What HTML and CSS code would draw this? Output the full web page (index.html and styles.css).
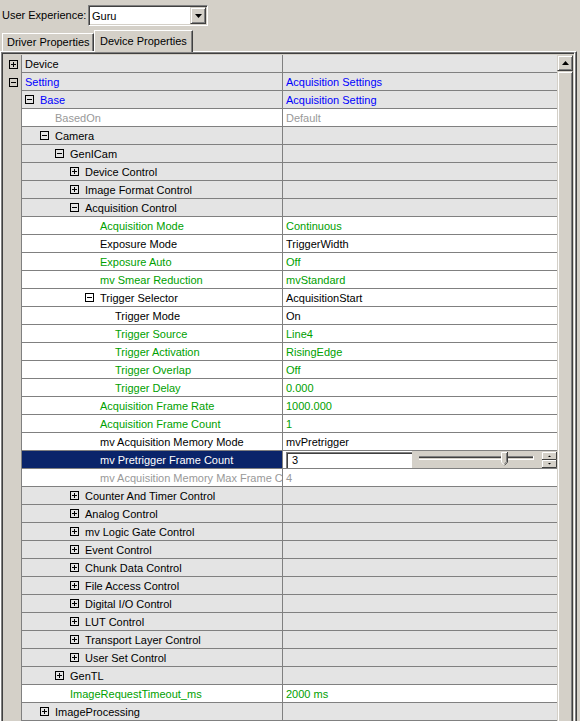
FILE: index.html
```html
<!DOCTYPE html>
<html lang="en">
<head>
    <meta charset="UTF-8">
    <title>Device Properties</title>
    <link rel="stylesheet" href="styles.css">
</head>
<body>

    <div class="toolbar">
        <span class="label">User Experience:</span>
        <div class="combo">
            <span class="combo-text">Guru</span>
            <span class="combo-btn">
                <svg width="7" height="4" viewBox="0 0 7 4"><path d="M0 0H7L3.5 4Z" fill="#000"/></svg>
            </span>
        </div>
    </div>

    <div class="tabs">
        <div class="tab">Driver Properties</div>
        <div class="tab active">Device Properties</div>
    </div>

    <div class="page">
        <div class="grid">
            <div class="rows">
                <div class="row"><div class="gutter"><i class="box plus"></i></div><div class="name l0">Device</div><div class="value"></div></div>
                <div class="row"><div class="gutter"><i class="box minus"></i></div><div class="name l0 blue">Setting</div><div class="value blue">Acquisition Settings</div></div>
                <div class="row"><div class="gutter"></div><div class="name l1 blue"><i class="box minus"></i>Base</div><div class="value blue">Acquisition Setting</div></div>
                <div class="row leaf"><div class="gutter"></div><div class="name l2 dim">BasedOn</div><div class="value dim">Default</div></div>
                <div class="row"><div class="gutter"></div><div class="name l2"><i class="box minus"></i>Camera</div><div class="value"></div></div>
                <div class="row"><div class="gutter"></div><div class="name l3"><i class="box minus"></i>GenICam</div><div class="value"></div></div>
                <div class="row"><div class="gutter"></div><div class="name l4"><i class="box plus"></i>Device Control</div><div class="value"></div></div>
                <div class="row"><div class="gutter"></div><div class="name l4"><i class="box plus"></i>Image Format Control</div><div class="value"></div></div>
                <div class="row"><div class="gutter"></div><div class="name l4"><i class="box minus"></i>Acquisition Control</div><div class="value"></div></div>
                <div class="row leaf"><div class="gutter"></div><div class="name l5 green">Acquisition Mode</div><div class="value green">Continuous</div></div>
                <div class="row leaf"><div class="gutter"></div><div class="name l5">Exposure Mode</div><div class="value">TriggerWidth</div></div>
                <div class="row leaf"><div class="gutter"></div><div class="name l5 green">Exposure Auto</div><div class="value green">Off</div></div>
                <div class="row leaf"><div class="gutter"></div><div class="name l5 green">mv Smear Reduction</div><div class="value green">mvStandard</div></div>
                <div class="row leaf"><div class="gutter"></div><div class="name l5"><i class="box minus"></i>Trigger Selector</div><div class="value">AcquisitionStart</div></div>
                <div class="row leaf"><div class="gutter"></div><div class="name l6">Trigger Mode</div><div class="value">On</div></div>
                <div class="row leaf"><div class="gutter"></div><div class="name l6 green">Trigger Source</div><div class="value green">Line4</div></div>
                <div class="row leaf"><div class="gutter"></div><div class="name l6 green">Trigger Activation</div><div class="value green">RisingEdge</div></div>
                <div class="row leaf"><div class="gutter"></div><div class="name l6 green">Trigger Overlap</div><div class="value green">Off</div></div>
                <div class="row leaf"><div class="gutter"></div><div class="name l6 green">Trigger Delay</div><div class="value green">0.000</div></div>
                <div class="row leaf"><div class="gutter"></div><div class="name l5 green">Acquisition Frame Rate</div><div class="value green">1000.000</div></div>
                <div class="row leaf"><div class="gutter"></div><div class="name l5 green">Acquisition Frame Count</div><div class="value green">1</div></div>
                <div class="row leaf"><div class="gutter"></div><div class="name l5">mv Acquisition Memory Mode</div><div class="value">mvPretrigger</div></div>
                <div class="row leaf sel">
                    <div class="gutter"></div>
                    <div class="name l5">mv Pretrigger Frame Count</div>
                    <div class="value editor">
                        <div class="edit">3</div>
                        <div class="slider">
                            <svg width="145" height="17" viewBox="0 0 145 17">
                                <rect x="7" y="5" width="114" height="1" fill="#808080"/>
                                <rect x="7" y="6" width="114" height="1" fill="#404040"/>
                                <rect x="7" y="8" width="114" height="1" fill="#fff"/>
                                <rect x="121" y="5" width="1" height="4" fill="#fff"/>
                                <path d="M89 1H96V11L92.5 14.5L89 11Z" fill="#d4d0c8"/>
                                <path d="M89.5 11V1.5H95" stroke="#fff" fill="none"/>
                                <path d="M95.5 1V11.2L92.5 14.3" stroke="#404040" fill="none"/>
                                <path d="M94.5 2V10.8L92.5 12.8" stroke="#808080" fill="none"/>
                                <path d="M89.5 11.2L92 13.7" stroke="#fff" fill="none"/>
                                <rect x="130" y="1" width="15" height="8" fill="#d4d0c8"/>
                                <path d="M130.5 8.5V1.5H144" stroke="#fff" fill="none"/>
                                <path d="M144.5 1V8.5H130" stroke="#404040" fill="none"/>
                                <path d="M136 6H139L137.5 4.5Z" fill="#000"/>
                                <rect x="130" y="9" width="15" height="8" fill="#d4d0c8"/>
                                <path d="M130.5 16.5V9.5H144" stroke="#fff" fill="none"/>
                                <path d="M144.5 9V16.5H130" stroke="#404040" fill="none"/>
                                <path d="M136 12H139L137.5 13.5Z" fill="#000"/>
                            </svg>
                        </div>
                    </div>
                </div>
                <div class="row leaf"><div class="gutter"></div><div class="name l5 dim">mv Acquisition Memory Max Frame Count</div><div class="value dim">4</div></div>
                <div class="row"><div class="gutter"></div><div class="name l4"><i class="box plus"></i>Counter And Timer Control</div><div class="value"></div></div>
                <div class="row"><div class="gutter"></div><div class="name l4"><i class="box plus"></i>Analog Control</div><div class="value"></div></div>
                <div class="row"><div class="gutter"></div><div class="name l4"><i class="box plus"></i>mv Logic Gate Control</div><div class="value"></div></div>
                <div class="row"><div class="gutter"></div><div class="name l4"><i class="box plus"></i>Event Control</div><div class="value"></div></div>
                <div class="row"><div class="gutter"></div><div class="name l4"><i class="box plus"></i>Chunk Data Control</div><div class="value"></div></div>
                <div class="row"><div class="gutter"></div><div class="name l4"><i class="box plus"></i>File Access Control</div><div class="value"></div></div>
                <div class="row"><div class="gutter"></div><div class="name l4"><i class="box plus"></i>Digital I/O Control</div><div class="value"></div></div>
                <div class="row"><div class="gutter"></div><div class="name l4"><i class="box plus"></i>LUT Control</div><div class="value"></div></div>
                <div class="row"><div class="gutter"></div><div class="name l4"><i class="box plus"></i>Transport Layer Control</div><div class="value"></div></div>
                <div class="row"><div class="gutter"></div><div class="name l4"><i class="box plus"></i>User Set Control</div><div class="value"></div></div>
                <div class="row"><div class="gutter"></div><div class="name l3"><i class="box plus"></i>GenTL</div><div class="value"></div></div>
                <div class="row leaf"><div class="gutter"></div><div class="name l3 green">ImageRequestTimeout_ms</div><div class="value green">2000 ms</div></div>
                <div class="row"><div class="gutter"></div><div class="name l2"><i class="box plus"></i>ImageProcessing</div><div class="value"></div></div>
            </div>
            <div class="vscroll">
                <div class="scroll-btn">
                    <svg width="7" height="4" viewBox="0 0 7 4"><path d="M0 4H7L3.5 0Z" fill="#000"/></svg>
                </div>
                <div class="scroll-thumb"></div>
            </div>
        </div>
    </div>

</body>
</html>
```

FILE: styles.css
```css
body {
    margin: 0;
    background-color: #d4d0c8;
    font-family: "Liberation Sans", Arial, sans-serif;
    font-size: 11px;
    color: #000;
    height: 721px;
    overflow: hidden;
}
.toolbar {
    height: 30px;
    box-sizing: border-box;
    padding: 5px 0 0 2px;
    display: flex;
    align-items: flex-start;
}
.toolbar .label {
    width: 86px;
    line-height: 21px;
}
.combo {
    width: 120px;
    height: 21px;
    box-sizing: border-box;
    display: flex;
    align-items: center;
    background-color: #fff;
    border: 1px solid;
    border-color: #808080 #fff #fff #808080;
    box-shadow: inset 1px 1px #404040, inset -1px -1px #d4d0c8;
    padding: 1px;
}
.combo-text {
    flex: 1;
    padding-left: 2px;
}
.combo-btn {
    width: 16px;
    height: 17px;
    box-sizing: border-box;
    display: flex;
    align-items: center;
    justify-content: center;
    background-color: #d4d0c8;
    border: 1px solid;
    border-color: #d4d0c8 #404040 #404040 #d4d0c8;
    box-shadow: inset 1px 1px #fff, inset -1px -1px #808080;
}
.tabs {
    height: 21px;
    display: flex;
    align-items: flex-end;
    padding-left: 2px;
}
.tab {
    box-sizing: border-box;
    height: 18px;
    width: 92px;
    padding: 1px 0 0 4px;
    line-height: 15px;
    border: 1px solid;
    border-color: #fff #404040 transparent #fff;
    border-bottom: none;
    box-shadow: inset -1px 0 #808080;
}
.tab.active {
    width: 99px;
    height: 22px;
    padding: 3px 0 0 5px;
    margin-bottom: -1px;
    position: relative;
    z-index: 1;
    background-color: #d4d0c8;
}
.page {
    width: 577px;
    height: 700px;
    box-sizing: border-box;
    border-top: 1px solid #fff;
    border-left: 1px solid #fff;
    border-right: 1px solid #404040;
    padding-right: 1px;
    box-shadow: inset -1px 0 #808080;
}
.grid {
    display: flex;
    height: 100%;
    box-sizing: border-box;
    border: 1px solid;
    border-color: #808080 #fff #fff #808080;
    box-shadow: inset 1px 1px #404040, inset -1px -1px #d4d0c8;
    padding: 2px 1px 0 1px;
}
.rows {
    width: 554px;
}
.row {
    display: flex;
    height: 18px;
    background-color: #e4e4e4;
}
.row.leaf {
    background-color: #fff;
}
.gutter {
    width: 19px;
    box-sizing: border-box;
    border-right: 1px solid #808080;
    background-color: #d4d0c8;
    display: flex;
    align-items: center;
    padding-left: 6px;
}
.name, .value {
    box-sizing: border-box;
    border-bottom: 1px solid #808080;
    display: flex;
    align-items: center;
    white-space: nowrap;
    overflow: hidden;
}
.name {
    width: 261px;
    border-right: 1px solid #808080;
}
.value {
    flex: 1;
    padding-left: 3px;
}
.l0 { padding-left: 3px; }
.l1 { padding-left: 18px; }
.l2 { padding-left: 33px; }
.l3 { padding-left: 48px; }
.l4 { padding-left: 63px; }
.l5 { padding-left: 78px; }
.l6 { padding-left: 93px; }
.blue { color: #0000ff; }
.green { color: #00a000; }
.dim { color: #999; }
.box {
    display: inline-block;
    flex-shrink: 0;
    width: 9px;
    height: 9px;
    box-sizing: border-box;
    border: 1px solid #000;
    position: relative;
    margin: 0 6px 0 -15px;
}
.gutter .box {
    margin: 0;
}
.box::before {
    content: "";
    position: absolute;
    left: 1px;
    top: 3px;
    width: 5px;
    height: 1px;
    background-color: #000;
}
.box.plus::after {
    content: "";
    position: absolute;
    left: 3px;
    top: 1px;
    width: 1px;
    height: 5px;
    background-color: #000;
}
.row.sel .name {
    background-color: #0a246a;
    color: #fff;
}
.value.editor {
    padding-left: 0;
    align-items: stretch;
    background-color: #fff;
}
.edit {
    width: 126px;
    box-sizing: border-box;
    margin: 1px 0 0 3px;
    padding-left: 5px;
    line-height: 14px;
    background-color: #fff;
    border-top: 1px solid #808080;
    border-left: 1px solid #808080;
    box-shadow: inset 1px 1px #404040;
}
.slider {
    flex: 1;
    background-color: #d4d0c8;
    display: flex;
}
.vscroll {
    width: 16px;
    display: flex;
    flex-direction: column;
}
.scroll-btn, .scroll-thumb {
    box-sizing: border-box;
    border: 1px solid;
    border-color: #d4d0c8 #404040 #404040 #d4d0c8;
    box-shadow: inset 1px 1px #fff, inset -1px -1px #808080;
    background-color: #d4d0c8;
}
.scroll-btn {
    height: 16px;
    display: flex;
    align-items: center;
    justify-content: center;
}
.scroll-thumb {
    flex: 1;
}
```
